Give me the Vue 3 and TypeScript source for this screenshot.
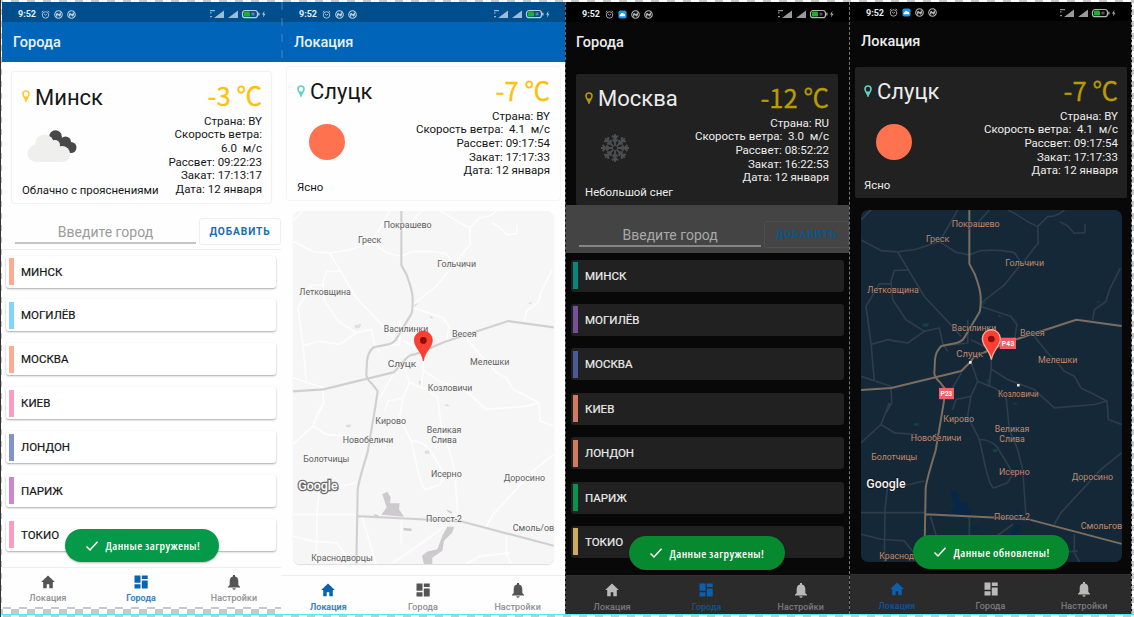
<script setup lang="ts">
interface City { name: string; color: string }
interface Screen {
  id: string
  dark: boolean
  map: boolean
  title: string
  city: string
  temp: string
  lines: string[]
  icon: 'cloud' | 'sun' | 'snow'
  desc: string
  cities: City[]
  toast: string
  active: number
}
interface Place { t: string; x: number; y: number; w: number; big?: boolean }

const names = ['МИНСК', 'МОГИЛЁВ', 'МОСКВА', 'КИЕВ', 'ЛОНДОН', 'ПАРИЖ', 'ТОКИО']
const withColors = (colors: string[]): City[] => names.map((name, i) => ({ name, color: colors[i] }))
const slutsk = ['Страна: BY', 'Скорость ветра:  4.1  м/с', 'Рассвет: 09:17:54', 'Закат: 17:17:33', 'Дата: 12 января']

const screens: Screen[] = [
  {
    id: 'a', dark: false, map: false, title: 'Города', city: 'Минск', temp: '-3 ℃', icon: 'cloud', desc: 'Облачно с прояснениями',
    lines: ['Страна: BY', 'Скорость ветра:', '6.0  м/с', 'Рассвет: 09:22:23', 'Закат: 17:13:17', 'Дата: 12 января'],
    cities: withColors(['#ffab91', '#81d4fa', '#ffab91', '#ff9dc0', '#8292cf', '#ce84cf', '#ff9dc0']),
    toast: 'Данные загружены!', active: 1,
  },
  { id: 'b', dark: false, map: true, title: 'Локация', city: 'Слуцк', temp: '-7 ℃', icon: 'sun', desc: 'Ясно', lines: slutsk, cities: [], toast: '', active: 0 },
  {
    id: 'c', dark: true, map: false, title: 'Города', city: 'Москва', temp: '-12 ℃', icon: 'snow', desc: 'Небольшой снег',
    lines: ['Страна: RU', 'Скорость ветра:  3.0  м/с', 'Рассвет: 08:52:22', 'Закат: 16:22:53', 'Дата: 12 января'],
    cities: withColors(['#07877b', '#77509c', '#4a5998', '#d07a63', '#d07a63', '#07934c', '#ceab62']),
    toast: 'Данные загружены!', active: 1,
  },
  { id: 'd', dark: true, map: true, title: 'Локация', city: 'Слуцк', temp: '-7 ℃', icon: 'sun', desc: 'Ясно', lines: slutsk, cities: [], toast: 'Данные обновлены!', active: 0 },
]

const places = (dark: boolean): Place[] => [
  { t: 'Покрашево', x: 344, y: 51, w: 144 },
  { t: 'Греск', x: 230, y: 97, w: 70 },
  { t: 'Гольчичи', x: 491, y: 169, w: 116 },
  { t: 'Летковщина', x: 96, y: 251, w: 154 },
  { t: 'Василинки', x: 339, y: 363, w: 133 },
  { t: 'Весея', x: 514, y: 379, w: 74 },
  dark ? { t: 'Слуцк', x: 326, y: 441, w: 80, big: true } : { t: 'Слуцк', x: 327, y: 469, w: 86, big: true },
  { t: 'Мелешки', x: 590, y: 461, w: 118 },
  dark ? { t: 'Козловичи', x: 472, y: 562, w: 122 } : { t: 'Козловичи', x: 471, y: 539, w: 134 },
  { t: 'Кирово', x: 293, y: 639, w: 92 },
  { t: 'Великая', x: 453, y: 667, w: 104 },
  { t: 'Слива', x: 453, y: 697, w: 76 },
  { t: 'Новобеличи', x: 225, y: 695, w: 152 },
  { t: 'Болотчицы', x: 100, y: 752, w: 138 },
  { t: 'Исерно', x: 460, y: 797, w: 92 },
  { t: 'Доросино', x: 694, y: 811, w: 124 },
  { t: 'Погост-2', x: 453, y: 932, w: 108 },
  { t: dark ? 'Смольгово' : 'Смоль/ово', x: 729, y: 959, w: 140 },
  { t: 'Краснодворцы', x: 147, y: 1049, w: 184 },
]

const minor = 'M0 90L60 122 110 126 165 118 235 95 250 70 290 0M235 95L285 127 325 135 360 122Q410 118 460 128L475 150 485 160 515 120 532 100 530 50 500 35 460 10 440 0M530 50L560 20Q590 20 610 0M475 170L430 225 360 280M385 0L340 50M30 0L0 30M110 126L190 260 265 340 300 380M140 180L100 182 90 215 95 270 135 330 190 365 235 355 245 400 260 425M92 222H55L15 290 30 400 40 515M30 404L80 390 140 400 190 365M0 500L90 530 92 580 75 610M360 290L450 320 468 345 460 390M596 35L620 48 640 70 672 68V42M778 175L745 240 735 275 700 300 695 330M520 380L560 430 590 460 610 485 640 500 660 535 700 555 738 575 742 630 782 645M390 478L440 510 520 540 580 595 700 585 735 575M390 478L385 530 350 515 330 457M390 478L392 430M350 515L330 560 285 570 275 600M301 490L260 560M350 515L400 535 435 560 445 660 470 720 485 780 495 920M330 560L320 620 355 690 375 780Q390 840 400 835L440 820 458 790M355 690Q390 690 410 715L455 790M782 730L720 780 600 910 580 945M0 910H190M0 975L60 990 130 995 165 1040M70 1058L72 900 80 830Q95 800 125 830L190 815M0 700L60 645 85 580M60 645L100 670 170 675M208 920L250 1060M325 925V1000M456 945L380 1000 300 1055M640 975V1030L655 1058M520 1058L560 1035 650 1025M320 330V400L245 409M330 390L370 410'
const major = 'M325 0V162L341 192Q359 240 359 262 360 300 354 310L311 382Q305 395 286 400L241 409Q224 425 222 450L220 492Q222 505 236 517L254 540 246 593 224 723Q194 820 194 838L190 1058M0 541L91 535 301 484 328 457Q345 430 365 430L456 392 646 330 782 349M194 915L396 925 506 931 782 1004'
const water = 'M268 849L283 842 293 859 291 876 320 876 318 894 333 917 265 911 281 889ZM463 947L483 947 478 964 453 989 448 1019 418 1039 418 1060H393L387 1034 403 1021 433 1014 448 974ZM463 895L478 903 474 908 462 899ZM332 950L357 953 354 960 331 957ZM241 909L258 912 248 917Z'
const green = 'M363 282L378 274 366 288ZM183 343L205 338 200 350 188 352ZM411 314L423 320 412 323ZM705 277L717 272 714 280ZM457 578L472 584 459 586ZM158 641L175 640 170 650 160 648ZM395 720L408 718 410 728 396 728ZM376 510L384 510 382 528Z'

const tabs = ['Локация', 'Города', 'Настройки']
</script>

<template>
  <div class="board">
    <div v-for="s in screens" :key="s.id" class="phone" :class="['p-' + s.id, s.dark ? 'dark' : 'light', s.map ? 'with-map' : 'with-list']">
      <div class="status">
        <span class="clock">9:52</span>
        <svg class="st" viewBox="0 0 10 10"><g fill="none" stroke="currentColor" stroke-width="1"><circle cx="5" cy="5.5" r="3.6" /><path d="M.8 2.6L2.6.9M9.2 2.6L7.4.9M3.2 4.3L5 5.8l1.6-1" /></g></svg>
        <svg v-if="s.dark" class="st" viewBox="0 0 10 10"><rect x=".5" y=".5" width="9" height="9" rx="2" fill="#1d96e8" /><path d="M2 7Q1 5 3 4.6 4.2 2 6 4q2.500 0 2 3z" fill="#fff" /></svg>
        <svg v-for="n in 2" :key="n" class="st" viewBox="0 0 10 10"><g fill="none" stroke="currentColor"><circle cx="5" cy="5" r="4.200" stroke-width="1.200" /><path d="M3 3.500l4 3.500M7 2.800v2.400H4.600M3 4v3.200" stroke-width="1.500" /></g></svg>
        <svg class="signals" viewBox="0 0 58 10">
          <g fill="currentColor">
            <path d="M1 1h5v1.200H1zM1 3.300h1.500v1.200H1zM1 7h2v1.200H1z" opacity=".8" />
            <path d="M5 9L15 1.500V9zM19 9L29 1.500V9z" opacity=".85" />
            <path d="M55.500 2l-2.500 3.500h1.600L54 8.500l2.500-3.700h-1.600z" />
          </g>
          <rect x="33.500" y="1.500" width="15" height="7.200" rx="2.800" fill="none" stroke="currentColor" stroke-width="1.200" />
          <path d="M49.200 3.800h1.300v2.600h-1.300z" fill="currentColor" />
          <rect x="35" y="2.600" width="6" height="5" rx="1.200" fill="#18b428" />
          <path d="M42.500 3.500h3v3h-3z" fill="currentColor" opacity=".45" />
        </svg>
      </div>
      <header class="appbar">{{ s.title }}</header>

      <section class="card">
        <div class="left">
          <div class="city">
            <svg class="pin" viewBox="0 0 8 12"><path d="M4 1a3 3 0 0 1 3 3C7 6.500 5 7.500 4 10.800 3 7.500 1 6.500 1 4a3 3 0 0 1 3-3z" fill="none" stroke="currentColor" stroke-width="1.600" /><path d="M2 6.500h4L4 11.300z" fill="currentColor" /></svg>
            <span>{{ s.city }}</span>
          </div>
          <div class="weather">
            <svg v-if="s.icon === 'cloud'" class="cloud" viewBox="0 0 50 32">
              <g fill="#48484a"><circle cx="28.500" cy="6.500" r="6.300" /><circle cx="38.500" cy="12" r="5.500" /><circle cx="44" cy="17.500" r="5.500" /><path d="M24 10l7-6 16 15-6 4-7-4-3-5z" /></g>
              <g fill="#efefed"><circle cx="17.500" cy="14" r="9.500" /><circle cx="9" cy="23.500" r="8.500" /><circle cx="28" cy="15" r="5" /><circle cx="35" cy="24" r="8" /><path d="M9 14h19l8 8-1 10H9z" /></g>
            </svg>
            <span v-else-if="s.icon === 'sun'" class="sun"></span>
            <svg v-else class="snow" viewBox="0 0 30 30">
              <g fill="none" stroke="#4d4e50" stroke-width="1.900">
                <path v-for="n in 8" :key="n" d="M15 13V1M15 5.500l-3-3M15 5.500l3-3M15 9l-2.600-2.600M15 9l2.600-2.600" :transform="`rotate(${n * 45} 15 15)`" />
              </g>
            </svg>
          </div>
          <div class="desc">{{ s.desc }}</div>
        </div>
        <div class="right">
          <div class="temp">{{ s.temp }}</div>
          <div v-for="l in s.lines" :key="l" class="line">{{ l }}</div>
        </div>
      </section>

      <template v-if="!s.map">
        <div class="entry">
          <div class="field">Введите город</div>
          <div class="add">ДОБАВИТЬ</div>
        </div>
        <div class="list">
          <div v-for="c in s.cities" :key="c.name" class="item">
            <i :style="{ background: c.color }"></i><span>{{ c.name }}</span>
          </div>
        </div>
      </template>

      <svg v-else class="map" viewBox="0 0 783 1060" preserveAspectRatio="none">
        <rect class="ground" width="783" height="1060" />
        <path class="green" :d="green" />
        <path class="water" :d="water" />
        <path class="minor" :d="minor" />
        <path class="major" :d="major" />
        <g v-for="p in places(s.dark)" :key="p.t">
          <text :class="{ big: p.big }" :x="p.x" :y="p.y" :textLength="p.w" lengthAdjust="spacingAndGlyphs">{{ p.t }}</text>
        </g>
        <template v-if="s.dark">
          <rect x="416" y="384" width="49" height="34" fill="#ec6166" />
          <text class="badge" x="441" y="409" textLength="38">P43</text>
          <rect x="234" y="535" width="45" height="34" fill="#ec6166" />
          <text class="badge" x="256" y="560" textLength="35">P23</text>
          <path d="M324 454h8v8h-8zM468 523h8v8h-8z" fill="#e8e4df" />
        </template>
        <path class="marker" d="M391 360a27 27 0 0 1 27 27C418 410 396 420 391 450 386 420 364 410 364 387a27 27 0 0 1 27-27z" />
        <circle cx="391" cy="388" r="10" fill="#8c0d0d" />
        <text class="google" x="75" y="837" textLength="118" lengthAdjust="spacingAndGlyphs">Google</text>
      </svg>

      <nav class="nav">
        <div v-for="(t, i) in tabs" :key="t" class="tab" :class="{ on: i === s.active }">
          <svg viewBox="0 0 16 16" fill="currentColor">
            <path v-if="i === 0" d="M8 1.600L1.200 8h2v6.300h3.500v-4h2.600v4h3.500V8h2z" />
            <path v-else-if="i === 1" d="M1.500 1.500h6v7.200h-6zM8.800 1.500h5.900v3.600H8.800zM1.500 10.200h6v4.300h-6zM8.800 6.600h5.900v7.900H8.800z" />
            <path v-else d="M7 1h2v1.400Q12.300 3.300 12.300 7v4l1.700 1.700v.8H2v-.8L3.700 11V7Q3.700 3.300 7 2.400zM6.300 14.200h3.400Q9.300 15.700 8 15.700T6.300 14.200z" />
          </svg>
          <span>{{ t }}</span>
        </div>
      </nav>

      <div v-if="s.toast" class="toast">
        <svg viewBox="0 0 14 12"><path d="M1.500 6.500L5 10 12.500 1.800" fill="none" stroke="#fff" stroke-width="1.500" /></svg>
        <span>{{ s.toast }}</span>
      </div>
    </div>
    <div class="seam"></div>
    <div class="guide"></div>
  </div>
</template>

<style>
body { margin: 0; }
</style>

<style scoped>
.board {
  position: relative; display: flex; align-items: flex-start; box-sizing: border-box; width: 1134px; height: 617px; padding: 2px 2px 0 1px; overflow: hidden;
  font-family: Roboto, "Liberation Sans", sans-serif;
  background: repeating-conic-gradient(#fff 0 25%, #c8c8c8 0 50%) 2px 3px / 16px 12px;
  border-left: 1px solid #333;
}
.guide { position: absolute; left: 0; right: 0; top: 614px; height: 1px; background: #45f2f2; }
.seam { position: absolute; left: 280px; top: 2px; width: 2px; height: 60px; background: repeating-linear-gradient(#7f8fd055 0 8px, transparent 8px 16px); }
.phone { position: relative; display: flex; flex-direction: column; box-sizing: border-box; overflow: hidden; }
.p-a { width: 279px; height: 605px; }
.p-b { width: 284px; height: 612px; }
.p-c { width: 284px; height: 612px; border-left: 1px dashed #666; }
.p-d { width: 283px; height: 612px; border-left: 1px dashed #777; border-right: 1px dashed #888; }
.light { background: #fefefe; color: #161616; }
.dark { background: #080808; color: #ececec; }

.status { display: flex; align-items: center; flex: none; gap: 4px; height: 20px; padding: 4px 14px 0 16px; box-sizing: border-box; color: #b9cfe0; }
.light .status { background: #004e8b; }
.p-b .status { padding-left: 18px; }
.dark .status { background: #000; color: #b5b5b5; }
.clock { width: 19px; font-size: 9px; font-weight: 700; line-height: 10px; color: #e6eef4; }
.st { width: 9px; height: 9px; }
.signals { width: 58px; height: 10px; margin-left: auto; }
.p-d .status { height: 19px; padding-top: 2px; }
.appbar { flex: none; height: 40px; padding-left: 11px; box-sizing: border-box; line-height: 42px; font-size: 14.500px; font-weight: 500; }
.light .appbar { background: #0064b8; color: #eaf2f9; }
.p-b .appbar { padding-left: 13px; }
.p-c .appbar, .p-d .appbar { padding-left: 10px; }
.p-d .appbar { padding-left: 11px; }

.card { display: flex; flex: none; justify-content: space-between; position: relative; box-sizing: border-box; height: 131px; margin: 10px 10px 0 10px; padding: 0 9px 0 10px; border-radius: 2px; }
.light .card { box-shadow: 0 0 2px #0003; background: #fefefe; }
.dark .card { background: #212121; }
.p-b .card { margin: 5px 5px 0 6px; height: 133px; box-shadow: 0 0 2px #0002; padding-right: 10px; }
.p-c .card { margin: 12px 11px 0 10px; padding-left: 9px; }
.p-d .card { margin: 6px 4px 0 5px; padding-left: 9px; }
.left { display: flex; flex-direction: column; flex: none; }
.city { display: flex; align-items: center; gap: 5px; height: 49px; font-size: 22px; }
.p-a .city { height: 50px; margin-bottom: -1px; }
.pin { width: 8px; height: 12px; margin-bottom: 2px; color: #ffc933; }
.p-b .pin, .p-d .pin { color: #62cfc5; }
.p-c .pin { color: #b59a10; }
.weather { height: 62px; }
.cloud { display: block; width: 50px; height: 32px; margin: 9px 0 0 5px; }
.sun { display: block; width: 36px; height: 36px; margin: 8px 0 0 12px; border-radius: 50%; background: #ff7250; }
.p-b .weather { height: 64px; }
.snow { display: block; width: 30px; height: 30px; margin: 10px 0 0 15px; }
.desc { height: 14px; line-height: 15px; font-size: 11.400px; white-space: nowrap; }
.right { position: relative; display: flex; flex-direction: column; align-items: flex-end; flex: 1; min-width: 0; }
.temp { flex: none; height: 35.500px; margin-top: 6px; line-height: 33px; font-family: "Noto Sans CJK SC", sans-serif; font-size: 25.600px; white-space: nowrap; color: #ffbf0a; -webkit-text-stroke: .3px currentColor; }
.dark .temp { color: #b99c04; }
.line { height: 13.700px; line-height: 14px; font-size: 11.500px; white-space: pre; }

.entry { display: flex; flex: none; box-sizing: border-box; height: 46.500px; padding: 14.500px 0 0 13px; border-bottom: 1px solid #eee; }
.field { width: 181px; height: 26px; box-sizing: border-box; border-bottom: 2px solid #c5c5c5; text-align: center; line-height: 28px; font-size: 14px; color: #9b9b9b; }
.add { width: 82px; height: 27px; margin-left: 3px; box-sizing: border-box; border: 1px solid #eee; border-radius: 3px; text-align: center; line-height: 25px; font-size: 10.200px; font-weight: 700; letter-spacing: .900px; color: #166db0; }
.p-c .entry { height: 48px; background: #444; border: 0; padding-top: 16px; }
.p-c .field { width: 183px; border-color: #858585; color: #a9a9a9; }
.p-c .add { width: 85px; border-color: #4e4e4e; color: #0b5588; }
.list { display: flex; flex-direction: column; gap: 11.900px; padding: 6px 5px 0 4px; }
.item { display: flex; align-items: center; flex: none; box-sizing: border-box; height: 32px; padding-left: 3px; border-radius: 3px; font-size: 11.500px; -webkit-text-stroke: .2px currentColor; }
.item i { width: 5px; height: 27px; margin-right: 7px; }
.light .item { background: #fff; box-shadow: 0 1px 2px #0005; }
.p-c .list { gap: 12.400px; padding: 6.600px 5px 0 5px; }
.p-c .item { height: 32px; padding-left: 2px; background: #212121; }

.map { display: block; flex: none; width: 261px; height: 353.500px; margin: 9px 0 0 11px; border-radius: 7px; }
.p-b .map { box-shadow: 0 1px 1px #0002; margin: 10.500px 0 0 11.500px; }
.p-d .map { height: 352.500px; margin: 11.500px 0 0 10.500px; }
.ground { fill: #f6f6f6; }
.water { fill: #cdcacd; }
.green { fill: #dedede; }
.minor { fill: none; stroke: #fdfdfd; stroke-width: 5; stroke-linejoin: round; }
.major { fill: none; stroke: #d2cfd2; stroke-width: 6.500; stroke-linejoin: round; }
.map text { text-anchor: middle; font-size: 27px; fill: #606060; stroke: #f6f6f6; stroke-width: 3; paint-order: stroke; }
.map text.big { font-size: 29px; }
.map text.google { font-size: 38px; font-weight: 500; fill: #fff; stroke: #6d6d6d; stroke-width: 8; }
.marker { fill: #fb3f31; stroke: #e23329; stroke-width: 2; }
.dark .ground { fill: #142838; }
.dark .water { fill: #082747; }
.dark .green { fill: #12443f; }
.dark .minor { stroke: #2d3e4a; stroke-width: 5; }
.dark .major { stroke: #7b6e60; stroke-width: 6; }
.dark .map text { fill: #c48968; stroke: #142838; }
.dark .map text.google { fill: #f4f4f4; stroke: #111; stroke-width: 4; }
.dark .map text.badge { font-size: 20px; font-weight: 700; fill: #fff; stroke: none; }
.dark .marker { stroke: #ffaaa4; stroke-width: 4; }

.nav { display: flex; flex: none; box-sizing: border-box; height: 40px; margin-top: auto; border-top: 1px solid #eee; background: #fefefe; color: #666; }
.tab { display: flex; flex: 1; flex-direction: column; align-items: center; padding-top: 6px; }
.tab svg { width: 16px; height: 16px; color: #555; }
.tab span { margin-top: 3px; font-size: 8.800px; line-height: 12px; letter-spacing: .2px; color: #8b8b8b; -webkit-text-stroke: .2px currentColor; }
.tab.on svg, .tab.on span { color: #0864ae; }
.tab.on span { color: #377fb8; font-weight: 500; letter-spacing: .1px; }
.p-a .tab { padding-right: 1px; padding-top: 5.500px; }
.p-a .tab span { margin-top: 2px; }
.p-b .nav { height: 39px; }
.dark .nav { height: 39px; border-top-color: #303030; background: #2b2b2b; }
.dark .tab { padding-right: 2px; }
.dark .tab svg { color: #b9b9b9; }
.dark .tab span { color: #7f7f7f; }
.dark .tab.on svg { color: #0b60ae; }
.dark .tab.on span { color: #10528a; }
.p-d .nav { height: 40px; }
.p-d .tab { padding-right: 0; }

.toast { position: absolute; left: 50%; bottom: 45px; display: flex; align-items: center; box-sizing: border-box; width: 154px; height: 33px; margin-left: -77px; padding-left: 20px; border-radius: 17px; background: #059a49; color: #fff; font-family: "Open Sans", Roboto, sans-serif; font-size: 11.500px; font-weight: 600; white-space: nowrap; box-shadow: 0 1px 2px #0004; }
.toast svg { width: 14px; height: 12px; margin-right: 7px; }
.dark .toast { width: 156px; height: 34px; margin-left: -79px; background: #06892f; bottom: 44px; }
.p-d .toast { bottom: 45px; margin-left: -78px; }
.toast span { font-stretch: condensed; letter-spacing: .4px; }
</style>
